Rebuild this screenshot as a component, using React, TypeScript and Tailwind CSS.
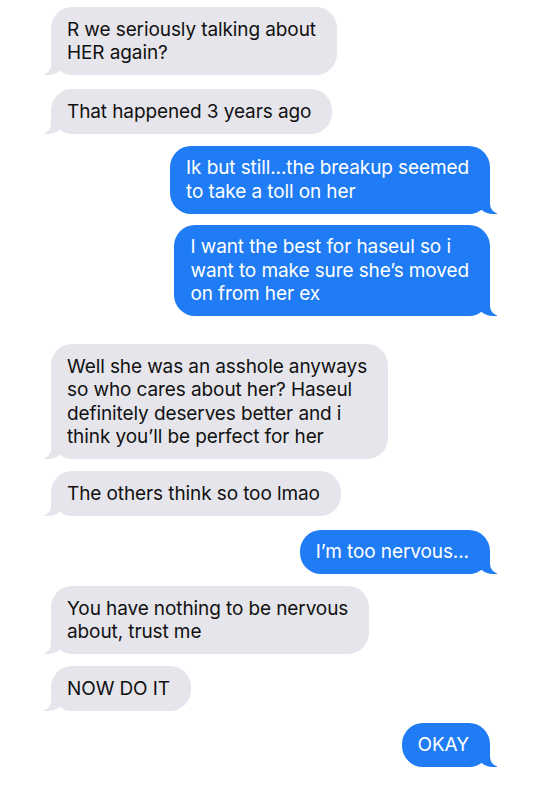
import React from "react";

type Msg = {
  lines: string[];
  me: boolean;
  gap: string;
};

const messages: Msg[] = [
  { lines: ["R we seriously talking about", "HER again?"], me: false, gap: "mt-0" },
  { lines: ["That happened 3 years ago"], me: false, gap: "mt-[14px]" },
  { lines: ["Ik but still...the breakup seemed", "to take a toll on her"], me: true, gap: "mt-[12px]" },
  {
    lines: ["I want the best for haseul so i", "want to make sure she\u2019s moved", "on from her ex"],
    me: true,
    gap: "mt-[11px]",
  },
  {
    lines: [
      "Well she was an asshole anyways",
      "so who cares about her? Haseul",
      "definitely deserves better and i",
      "think you\u2019ll be perfect for her",
    ],
    me: false,
    gap: "mt-[28px]",
  },
  { lines: ["The others think so too lmao"], me: false, gap: "mt-[12px]" },
  { lines: ["I\u2019m too nervous..."], me: true, gap: "mt-[14px]" },
  { lines: ["You have nothing to be nervous", "about, trust me"], me: false, gap: "mt-[12px]" },
  { lines: ["NOW DO IT"], me: false, gap: "mt-[12px]" },
  { lines: ["OKAY"], me: true, gap: "mt-[12px]" },
];

const Bubble = ({ msg }: { msg: Msg }) => {
  const { me, lines, gap } = msg;
  return (
    <div className={`flex ${me ? "justify-end" : "justify-start"} ${gap}`}>
      <div
        className={`relative rounded-[21px] pl-[16px] pr-[21px] py-[10.5px] text-[19px] leading-[23.5px] ${
          me ? "bg-[#1f7cf4] text-white" : "bg-[#e6e5eb] text-[#111111]"
        }`}
      >
        {/* tail */}
        {me ? (
          <>
            <span className="absolute bottom-0 right-[-7px] h-[20px] w-[20px] bg-[#1f7cf4] rounded-bl-[16px_14px]" />
            <span className="absolute bottom-0 right-[-26px] h-[20px] w-[26px] bg-white rounded-bl-[10px]" />
          </>
        ) : (
          <>
            <span className="absolute bottom-0 left-[-7px] h-[20px] w-[20px] bg-[#e6e5eb] rounded-br-[16px_14px]" />
            <span className="absolute bottom-0 left-[-26px] h-[20px] w-[26px] bg-white rounded-br-[10px]" />
          </>
        )}
        <div className="relative whitespace-nowrap">
          {lines.map((l, i) => (
            <div key={i}>{l}</div>
          ))}
        </div>
      </div>
    </div>
  );
};

export default function App() {
  return (
    <div className="w-[542px] h-[800px] overflow-hidden bg-white pt-[7px] pl-[51px] pr-[52px] font-['Inter',sans-serif] tracking-[-0.1px]">
      <div className="flex flex-col">
        {messages.map((m, i) => (
          <Bubble key={i} msg={m} />
        ))}
      </div>
    </div>
  );
}
